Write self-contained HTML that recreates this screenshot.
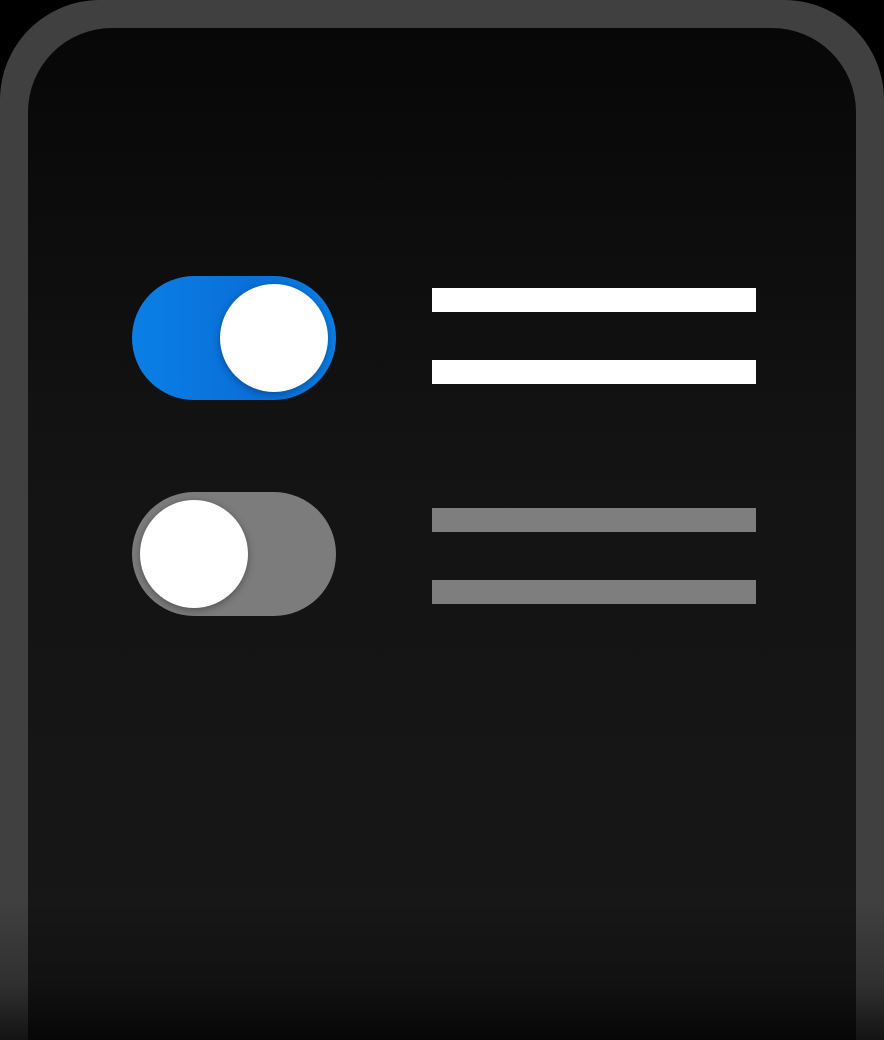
<!DOCTYPE html>
<html><head><style>
html,body{margin:0;padding:0;width:884px;height:1040px;background:#000;overflow:hidden}
.wrap{position:relative;width:884px;height:1040px;overflow:hidden;background:#000}
.frame{position:absolute;left:0;top:0;width:884px;height:1040px;background:#404040;border-radius:100px 100px 0 0}
.screen{position:absolute;left:28px;top:28px;width:828px;height:1012px;border-radius:84px 84px 0 0;background:linear-gradient(#070707 0px,#131313 420px,#171717 900px)}
.fade{position:absolute;left:0;top:900px;width:884px;height:140px;background:linear-gradient(rgba(0,0,0,0),rgba(0,0,0,0.25) 60%,rgba(0,0,0,0.7))}
.tg{position:absolute;width:204px;height:124px;border-radius:62px}
.k{position:absolute;width:108px;height:108px;border-radius:50%;background:#fff;top:8px;box-shadow:0 2px 8px rgba(0,0,0,.35)}
.bar{position:absolute;left:432px;width:324px;height:24px}
</style></head><body>
<div class="wrap">
<div class="frame"></div>
<div class="screen"></div>
<div class="tg" style="left:132px;top:276px;background:linear-gradient(90deg,#0a7fe6,#0a6fd8 60%,#0a7fe6)"><div class="k" style="left:88px"></div></div>
<div class="tg" style="left:132px;top:492px;background:#7c7c7c"><div class="k" style="left:8px"></div></div>
<div class="bar" style="top:288px;background:#fff"></div>
<div class="bar" style="top:360px;background:#fff"></div>
<div class="bar" style="top:508px;background:#7e7e7e"></div>
<div class="bar" style="top:580px;background:#7e7e7e"></div>
<div class="fade"></div>
</div>
</body></html>
